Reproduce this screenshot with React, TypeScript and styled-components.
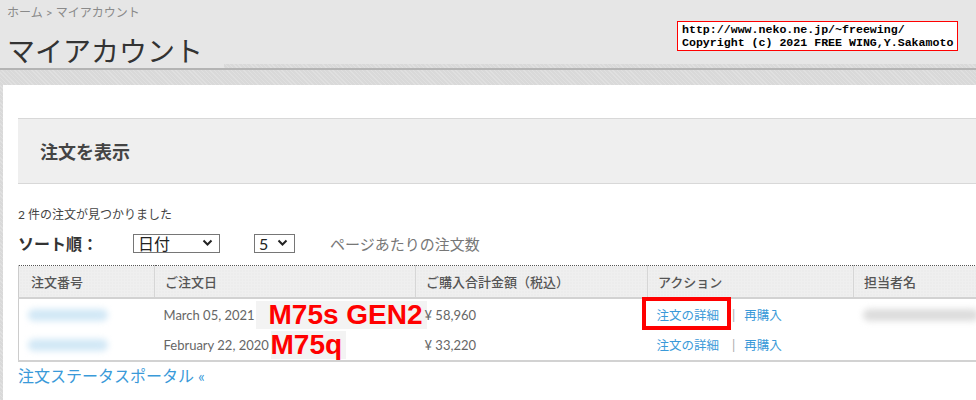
import styled, { createGlobalStyle } from 'styled-components';

const GlobalStyle = createGlobalStyle`
  html, body {
    margin: 0;
    padding: 0;
    width: 976px;
    height: 400px;
    overflow: hidden;
    background: #dadada;
    font-family: Lato, "Noto Sans CJK JP", sans-serif;
  }
`;

const hatch = `
  background-color: #d9d9d9;
  background-image: repeating-linear-gradient(45deg, rgba(255,255,255,0.18) 0 1px, transparent 1px 3px);
`;

const Page = styled.div`
  width: 976px;
  height: 400px;
  display: flex;
  flex-direction: column;
  ${hatch}
`;

const Header = styled.header`
  position: relative;
  display: flex;
  background: #e6e6e6;
  border-bottom: 2px solid #b4b4b4;
`;

const TitleBlock = styled.div`
  width: 217px;
  padding: 6px 0 0 7px;
  background: #e6e6e6;
`;

const Ledge = styled.div`
  flex: 1;
  align-self: flex-end;
  height: 4px;
  ${hatch}
`;

const Crumbs = styled.div`
  font-size: 12px;
  line-height: 14px;
  color: #8a8a8a;
`;

const Title = styled.h1`
  margin: 14px 0 0;
  font-size: 28px;
  line-height: 34px;
  font-weight: 400;
  color: #333;
  white-space: nowrap;
`;

const Stamp = styled.div`
  position: absolute;
  left: 677px;
  top: 21px;
  width: 271px;
  padding: 1px 4px;
  background: #fff;
  border: 1px solid #ff0000;
  font-family: "Liberation Mono", monospace;
  font-weight: 700;
  font-size: 11.6px;
  line-height: 13px;
  color: #000;
  white-space: pre;
`;

const Panel = styled.main`
  flex: 1;
  margin: 15px 0 0 3px;
  padding: 33px 0 0 15px;
  background: #fff;
  color: #444;
  overflow: hidden;
`;

const Heading = styled.h2`
  margin: 0;
  height: 64px;
  width: 1000px;
  display: flex;
  align-items: center;
  padding-left: 22px;
  background: #efefef;
  border-top: 1px solid #d8d8d8;
  border-bottom: 1px solid #d8d8d8;
  font-size: 18px;
  font-weight: 700;
  color: #444;
`;

const Found = styled.p`
  margin: 23px 0 0;
  font-size: 12px;
  line-height: 16px;
  color: #444;
`;

const SortRow = styled.div`
  display: flex;
  align-items: center;
  height: 22px;
  margin-top: 9px;
`;

const SortLabel = styled.span`
  width: 115px;
  font-size: 16px;
  font-weight: 700;
  color: #333;
`;

const SelectBox = styled.div<{ $w: number; $gap: number }>`
  width: ${(p) => p.$w}px;
  height: 17px;
  box-sizing: content-box;
  border: 1px solid #767676;
  display: flex;
  align-items: center;
  justify-content: space-between;
  padding: 0 6px 0 4px;
  margin-right: ${(p) => p.$gap}px;
  font-size: 16px;
  color: #222;
`;

const PerPage = styled.span`
  font-size: 15px;
  color: #777;
`;

const Table = styled.table`
  margin-top: 11px;
  width: 1035px;
  table-layout: fixed;
  border-collapse: collapse;
  border-top: 1px dotted #555;
  border-left: 1px solid #ccc;
  font-size: 13px;
  color: #666;
`;

const Th = styled.th`
  height: 31px;
  padding: 0 10px;
  text-align: left;
  font-weight: 500;
  color: #555;
  background-color: #efefef;
  background-image: radial-gradient(#e4e4e4 0.6px, transparent 0.7px);
  background-size: 3px 3px;
  border-right: 1px solid #d6d6d6;
  border-bottom: 2px solid #d2d2d2;
  &:first-child {
    padding-left: 12px;
  }
`;

const Tr = styled.tr`
  height: 31px;
  &:first-child td {
    padding-top: 1px;
  }
  &:last-child {
    height: 32px;
  }
  &:last-child td {
    border-bottom: 2px solid #d2d2d2;
  }
`;

const Td = styled.td`
  position: relative;
  padding: 0 9px;
  white-space: nowrap;
`;

const Blur = styled.div<{ $w: number; $c: string }>`
  width: ${(p) => p.$w}px;
  height: 12px;
  border-radius: 6px;
  background: ${(p) => p.$c};
  filter: blur(3px);
`;

const Note = styled.span<{ $left: number; $top: number; $pad: number }>`
  position: absolute;
  left: ${(p) => p.$left}px;
  top: ${(p) => p.$top}px;
  padding-left: ${(p) => p.$pad}px;
  padding-right: 4px;
  background: #f3f3f3;
  font-family: "Liberation Sans", Arial, sans-serif;
  font-weight: 700;
  font-size: 28px;
  line-height: 28px;
  color: #ff0000;
`;

const Link = styled.a<{ $mark?: boolean }>`
  position: relative;
  color: #3a9ad9;
  text-decoration: none;
  font-size: 12.5px;
  &::after {
    content: '';
    display: ${(p) => (p.$mark ? 'block' : 'none')};
    position: absolute;
    left: -15px;
    right: -12px;
    top: -11px;
    bottom: -7px;
    border: 4px solid #ff0000;
  }
`;

const Sep = styled.span`
  margin: 0 9px 0 13px;
  color: #aaa;
`;

const Portal = styled.a`
  display: block;
  margin-top: 1px;
  font-size: 16px;
  color: #3a9ad9;
  text-decoration: none;
`;

const Chevron = () => (
  <svg width="11" height="8" viewBox="0 0 11 8">
    <path d="M1.5 1.5 L5.5 5.5 L9.5 1.5" fill="none" stroke="#222" strokeWidth="2" />
  </svg>
);

const columns = [
  { label: '注文番号', width: 136 },
  { label: 'ご注文日', width: 261 },
  { label: 'ご購入合計金額（税込）', width: 232 },
  { label: 'アクション', width: 206 },
  { label: '担当者名', width: 200 },
];

const orders = [
  { date: 'March 05, 2021', total: '¥ 58,960', note: 'M75s GEN2', noteLeft: 101, pad: 13, mark: true, staff: true },
  { date: 'February 22, 2020', total: '¥ 33,220', note: 'M75q', noteLeft: 116, pad: 0, mark: false, staff: false },
];

const App = () => (
  <Page>
    <GlobalStyle />
    <Header>
      <TitleBlock>
        <Crumbs>ホーム &gt; マイアカウント</Crumbs>
        <Title>マイアカウント</Title>
      </TitleBlock>
      <Ledge />
      <Stamp>{'http://www.neko.ne.jp/~freewing/\nCopyright (c) 2021 FREE WING,Y.Sakamoto'}</Stamp>
    </Header>
    <Panel>
      <Heading>注文を表示</Heading>
      <Found>2 件の注文が見つかりました</Found>
      <SortRow>
        <SortLabel>ソート順：</SortLabel>
        <SelectBox $w={75} $gap={34}>
          日付
          <Chevron />
        </SelectBox>
        <SelectBox $w={29} $gap={35}>
          5
          <Chevron />
        </SelectBox>
        <PerPage>ページあたりの注文数</PerPage>
      </SortRow>
      <Table>
        <colgroup>
          {columns.map((c) => (
            <col key={c.label} style={{ width: c.width }} />
          ))}
        </colgroup>
        <thead>
          <tr>
            {columns.map((c) => (
              <Th key={c.label}>{c.label}</Th>
            ))}
          </tr>
        </thead>
        <tbody>
          {orders.map((o) => (
            <Tr key={o.date}>
              <Td>
                <Blur $w={80} $c="#d2e8f6" />
              </Td>
              <Td>
                {o.date}
                <Note $left={o.noteLeft} $top={2} $pad={o.pad}>
                  {o.note}
                </Note>
              </Td>
              <Td>{o.total}</Td>
              <Td>
                <Link $mark={o.mark}>注文の詳細</Link>
                <Sep>|</Sep>
                <Link>再購入</Link>
              </Td>
              <Td>{o.staff && <Blur $w={116} $c="#dcdcdc" />}</Td>
            </Tr>
          ))}
        </tbody>
      </Table>
      <Portal>注文ステータスポータル «</Portal>
    </Panel>
  </Page>
);

export default App;
